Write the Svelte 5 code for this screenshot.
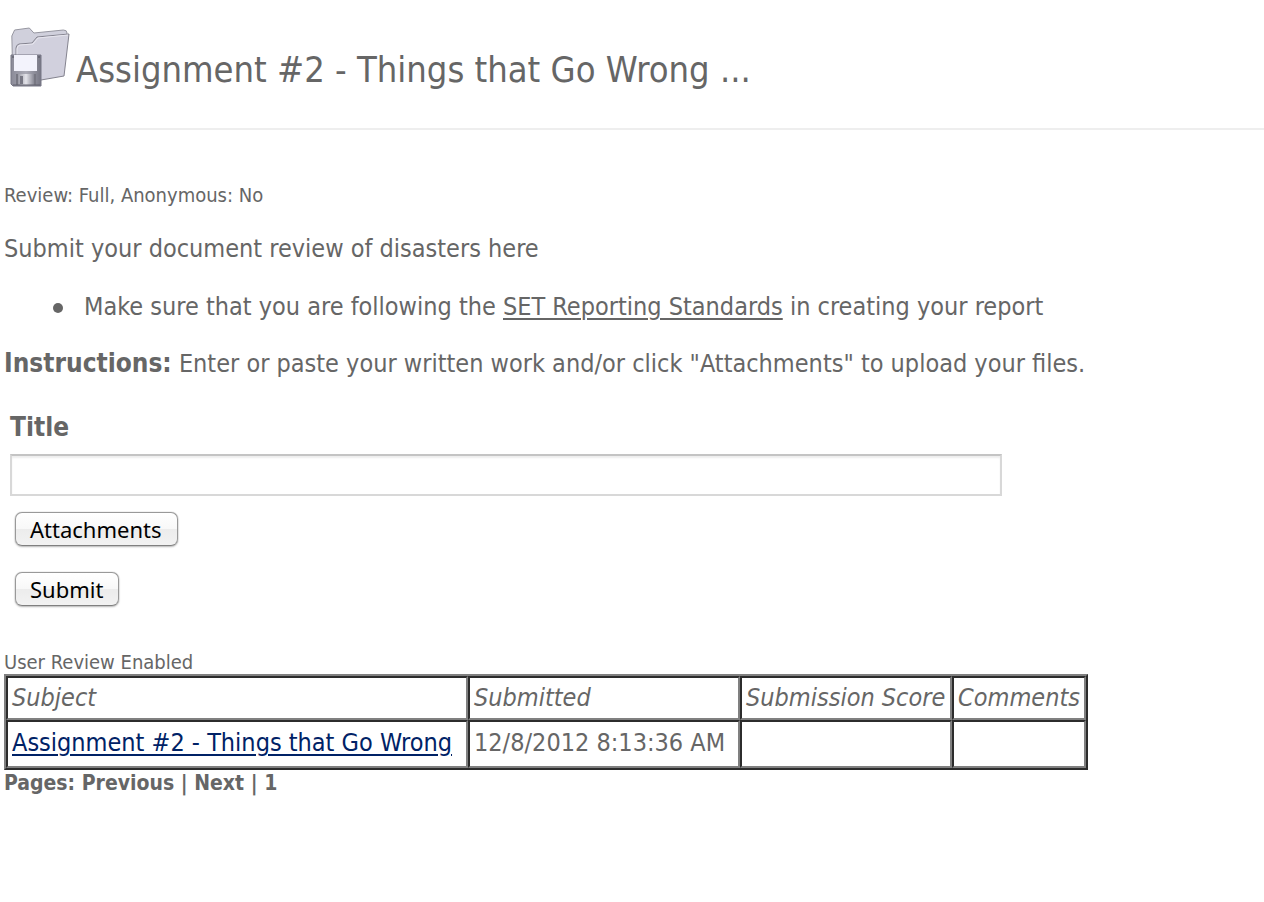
<script>
  let title = $state('');
  const columns = [
    { label: 'Subject', share: 462 },
    { label: 'Submitted', share: 272 },
    { label: 'Submission Score', share: 212 },
    { label: 'Comments', share: 134 }
  ];
  const total = columns.reduce((sum, column) => sum + column.share, 0);
</script>

<main>
  <header>
    <svg class="folder" viewBox="0 0 60 62" aria-hidden="true">
      <defs>
        <linearGradient id="metal" x1="0" x2="1">
          <stop offset="0" stop-color="#8b8b98" />
          <stop offset=".5" stop-color="#aaaab5" />
          <stop offset="1" stop-color="#777784" />
        </linearGradient>
        <linearGradient id="shutter" x1="0" x2="1">
          <stop offset="0" stop-color="#9999a4" />
          <stop offset=".5" stop-color="#e4e4ea" />
          <stop offset="1" stop-color="#888894" />
        </linearGradient>
      </defs>
      <path d="M3 50L2 9l3-6 16-2 5 5 32-3q4 0 4 3l-6 40-44 8z" transform="scale(.92 1)" fill="#d0d0dc" stroke="#92929d" />
      <path d="M6 54V21q0-3 3-4l13-1 5-6 32-3-5 42-46 8z" fill="#d1d0dd" stroke="#84838f" />
      <path d="M7 54V22q0-3 3-4l13-1 5-6 30-3" fill="none" stroke="#e8e7ef" />
      <path d="M1 28h30v31H3l-2-2z" fill="url(#metal)" stroke="#777785" />
      <path d="M4 28h23v16H4z" fill="#f3f3fc" />
      <path d="M2 30h2m24 0h2" stroke="#4f4f5a" />
      <path d="M6 47h20v11H6z" fill="#777782" />
      <path d="M8 47h16v11H8z" fill="url(#shutter)" />
      <path d="M10 49h3v8h-3z" fill="#777783" />
      <path d="M3 58h27" stroke="#62626e" />
    </svg>
    <h1>Assignment #2 - Things that Go Wrong ...</h1>
  </header>

  <section class="details">
    <p class="small">Review: Full, Anonymous: No</p>
    <p class="intro">Submit your document review of disasters here</p>
    <ul>
      <li>Make sure that you are following the <a href="#standards">SET Reporting Standards</a> in creating your report</li>
    </ul>
    <p class="instructions"><strong>Instructions:</strong> Enter or paste your written work and/or click "Attachments" to upload your files.</p>
  </section>

  <form onsubmit={(event) => event.preventDefault()}>
    <label for="title">Title</label>
    <input id="title" type="text" bind:value={title} />
    <button type="button">Attachments</button>
    <button type="submit">Submit</button>
  </form>

  <section class="submissions">
    <p class="small">User Review Enabled</p>
    <table>
      <colgroup>
        {#each columns as column}
          <col style:width={`${(column.share / total) * 100}%`} />
        {/each}
      </colgroup>
      <thead>
        <tr>
          {#each columns as column}
            <th scope="col">{column.label}</th>
          {/each}
        </tr>
      </thead>
      <tbody>
        <tr>
          <td><a class="subject" href="#submission">Assignment #2 - Things that Go Wrong</a></td>
          <td>12/8/2012 8:13:36 AM</td>
          <td></td>
          <td></td>
        </tr>
      </tbody>
    </table>
    <p class="pages">Pages: Previous | Next | 1</p>
  </section>
</main>

<style>
  :global(body) {
    background: #fff;
  }
  main {
    padding: 25px 0 24px 4px;
    color: #666;
    font-family: Tahoma, "DejaVu Sans Condensed", "DejaVu Sans", sans-serif;
    font-size: 25px;
    line-height: 32px;
    overflow-x: hidden;
  }
  h1, p, ul {
    margin: 0;
  }
  header {
    display: flex;
    align-items: center;
    gap: 6px;
    margin-left: 6px;
    border-bottom: 2px solid #eee;
    padding-bottom: 37px;
  }
  .folder {
    width: 60px;
    height: 66px;
    flex: none;
  }
  h1 {
    font-size: 36px;
    line-height: 42px;
    font-weight: 400;
    padding-top: 24px;
  }
  .details {
    padding-top: 53px;
  }
  .small {
    font-size: 20px;
    line-height: 24px;
  }
  .intro {
    margin-top: 26px;
  }
  ul {
    margin: 26px 0 24px;
    padding-left: 80px;
    list-style: none;
  }
  li::before {
    content: "";
    float: left;
    width: 10px;
    height: 10px;
    margin: 12px 0 0 -31px;
    border-radius: 50%;
    background: #666;
  }
  a {
    color: inherit;
    text-decoration-thickness: 2px;
    text-underline-offset: 3px;
  }
  form {
    display: flex;
    flex-direction: column;
    align-items: flex-start;
    padding: 31px 6px 0;
  }
  strong, label {
    font-size: 26px;
    font-weight: 700;
  }
  input {
    width: 100%;
    max-width: 992px;
    height: 42px;
    box-sizing: border-box;
    margin: 11px 0 16px;
    padding: 4px;
    border: 2px solid #d8d8d8;
    border-top-color: #c4c4c4;
    box-shadow: inset 0 2px 2px #eee;
    font: inherit;
    color: inherit;
  }
  button {
    height: 34px;
    margin: 0 0 26px 5px;
    padding: 0 15px 0 14px;
    border: 1px solid #999;
    border-bottom-color: #808080;
    border-radius: 7px;
    background: linear-gradient(#fff, #f8f8f8 50%, #ececec 50%, #f2f2f2);
    box-shadow: 0 0 1px #999, 0 1px 2px #bbb;
    color: #000;
    font-family: "Lucida Grande", "Noto Sans", sans-serif;
    font-size: 22px;
    line-height: 28px;
  }
  .submissions {
    padding-top: 18px;
  }
  table {
    width: 100%;
    max-width: 1084px;
    border: 2px solid;
    border-color: #808080 #2c2c2c #2c2c2c #808080;
    border-spacing: 0;
  }
  th, td {
    height: 44px;
    box-sizing: border-box;
    padding: 0 4px;
    border: 2px solid;
    border-color: #2c2c2c #808080 #808080 #2c2c2c;
    text-align: left;
    white-space: nowrap;
  }
  th {
    font-weight: 400;
    font-style: italic;
  }
  td {
    height: 48px;
    padding-bottom: 2px;
  }
  .subject {
    color: #026;
  }
  .pages {
    font-size: 21px;
    line-height: 26px;
    font-weight: 700;
  }
</style>
